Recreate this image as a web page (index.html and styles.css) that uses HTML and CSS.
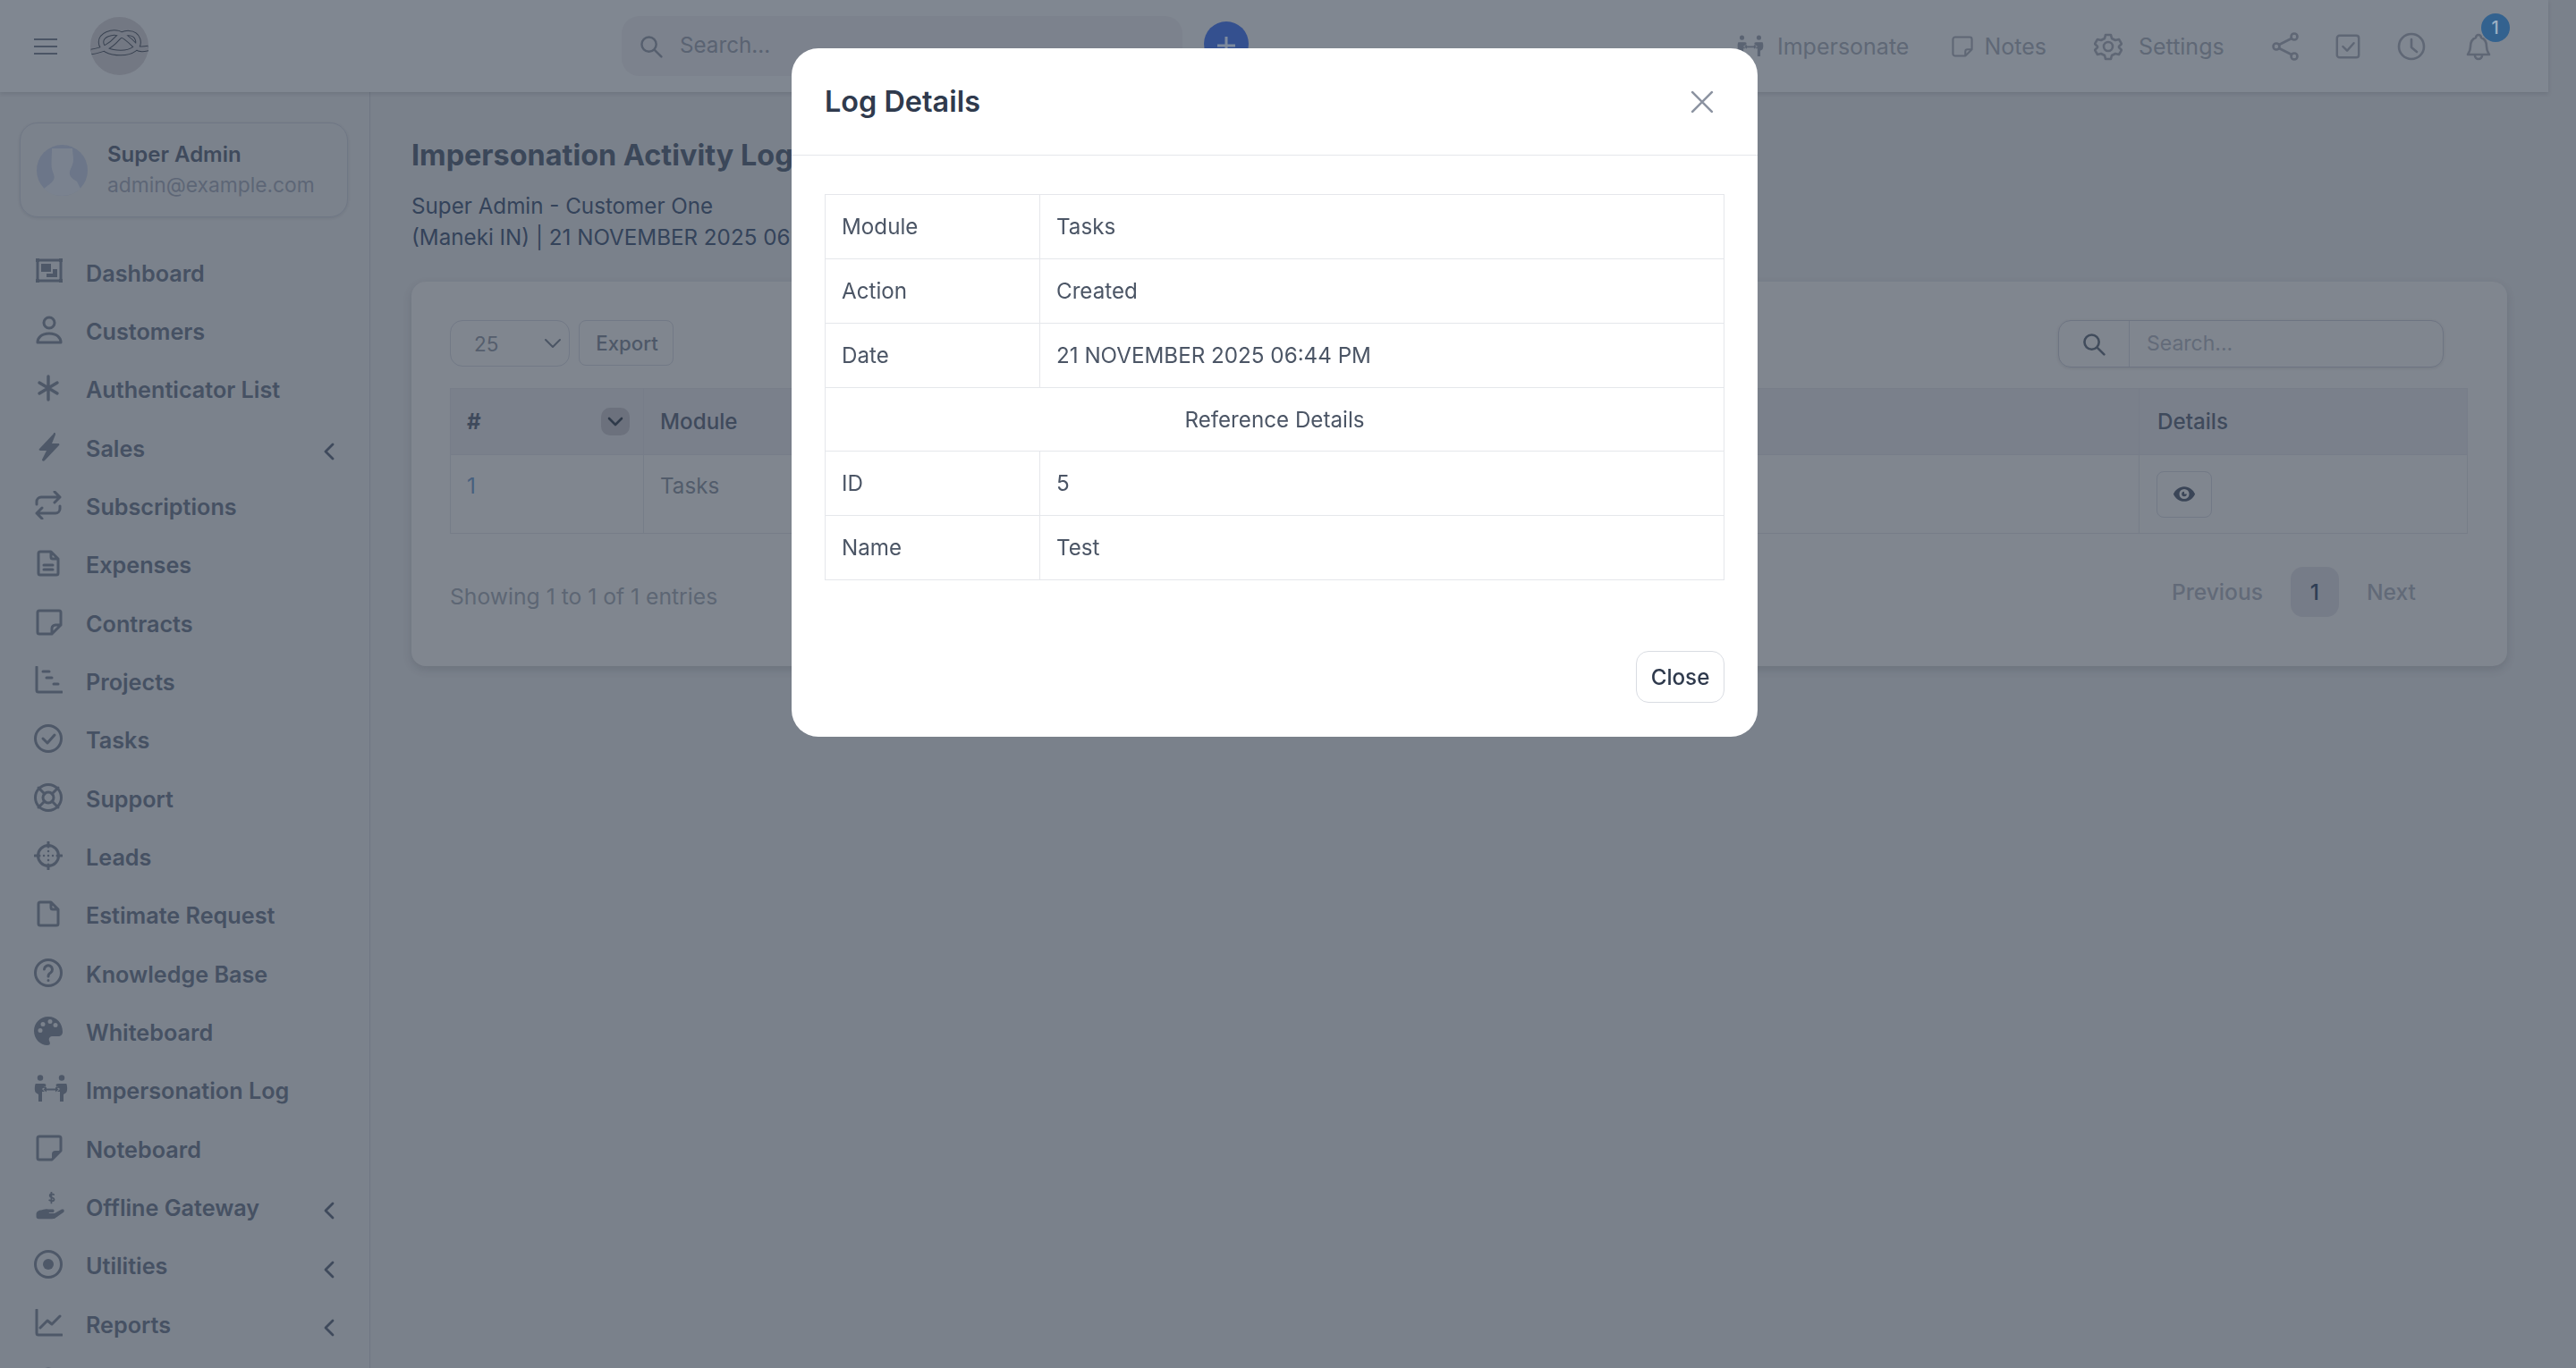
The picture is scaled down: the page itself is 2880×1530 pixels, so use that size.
FILE: index.html
```html
<!DOCTYPE html>
<html lang="en">
<head>
    <meta charset="UTF-8">
    <title>Impersonation Activity Log</title>
    <link rel="stylesheet" href="styles.css">
</head>
<body>
<header class="topbar">
    <button class="burger"><span></span><span></span><span></span></button>
    <div class="logo">
        <svg viewBox="0 0 65 65" width="65" height="65" fill="none">
            <path class="knot-out" d="M1 39 C14 37 22 33 30 24 C37 16 50 16 53 25 C56 34 46 40 34 40 C22 40 12 36 12 28 C12 20 24 16 31 18 C40 21 46 28 52 34 C55 37 60 36 65 35"/>
            <path class="knot-in" d="M1 39 C14 37 22 33 30 24 C37 16 50 16 53 25 C56 34 46 40 34 40 C22 40 12 36 12 28 C12 20 24 16 31 18 C40 21 46 28 52 34 C55 37 60 36 65 35"/>
        </svg>
    </div>
    <div class="topsearch">
        <svg class="ico" viewBox="0 0 32 32" width="26" height="26"><circle cx="13" cy="13" r="10"/><path d="M21 21l9 9"/></svg>
        <span>Search...</span>
    </div>
    <div class="addbtn"><svg viewBox="0 0 50 50" width="50" height="50"><path d="M25 17v20M15 27h20"/></svg></div>
    <nav class="toplinks">
        <a class="toplink link-imp"><svg class="ico solid" viewBox="0 0 38 32" width="30" height="28"><use href="#i-imp"/></svg>Impersonate</a>
        <a class="toplink link-notes"><svg class="ico" viewBox="0 0 32 32" width="26" height="28"><use href="#i-note"/></svg>Notes</a>
        <a class="toplink link-set"><svg class="ico" viewBox="0 0 32 32" width="32" height="32"><path d="M13 3h6l1 4 4 2 4-1 3 5-3 3v1l3 3-3 5-4-1-4 2-1 4h-6l-1-4-4-2-4 1-3-5 3-3v-1l-3-3 3-5 4 1 4-2z"/><circle cx="16" cy="16" r="5"/></svg>Settings</a>
        <svg class="ico ticon i-share" viewBox="0 0 32 32" width="32" height="32"><circle cx="6" cy="16" r="3.5"/><circle cx="26" cy="5" r="3.5"/><circle cx="26" cy="27" r="3.5"/><path d="M9 14L23 7M9 18l14 7"/></svg>
        <svg class="ico ticon i-check" viewBox="0 0 32 32" width="30" height="30"><rect x="3" y="3" width="26" height="26" rx="3"/><path d="M10 16l5 5 8-9"/></svg>
        <svg class="ico ticon i-clock" viewBox="0 0 32 32" width="32" height="32"><circle cx="16" cy="16" r="14"/><path d="M16 8v9l6 5"/></svg>
        <span class="bell">
            <svg class="ico" viewBox="0 0 32 32" width="32" height="32"><path d="M13 6a3 3 0 0 1 6 0c5 2 6 6 6 10 0 5 2 7 3 9H4c1-2 3-4 3-9 0-4 1-8 6-10zM12 26a4 4 0 0 0 8 0"/></svg>
            <b class="badge">1</b>
        </span>
    </nav>
</header>

<svg class="defs" width="0" height="0">
    <defs>
        <g id="i-imp"><circle cx="7" cy="3.5" r="3.2"/><circle cx="31" cy="3.5" r="3.2"/><path d="M2 10h9c2 0 3 1 2 3l-3 2h3v-2l-1 0 0 0-3 3 3 3H9v11H5V22L2 20c-2-2-1-10 0-10zM36 10h-9c-2 0-3 1-2 3l3 2h-3v-2l1 0 0 0 3 3-3 3h3v11h4V22l3-2c2-2 1-10 0-10z"/><path d="M14 13.5l-3.5 3 3.5 3v-2h10v2l3.5-3-3.5-3v2H14z"/></g>
        <path id="i-note" d="M6 3h20a3 3 0 0 1 3 3v14l-9 9H6a3 3 0 0 1-3-3V6a3 3 0 0 1 3-3zM20 29v-6a3 3 0 0 1 3-3h6"/>
    </defs>
</svg>

<div class="layout">
    <aside class="sidebar">
        <div class="usercard">
            <div class="avatar">
                <svg viewBox="0 0 57 57" width="57" height="57"><circle class="av-bg" cx="28.5" cy="28.5" r="28.5"/><path class="av-fg" d="M17 4h23c0 4 1 8 1 13 0 5-3 9-4 13-1 5 3 8 8 11l4 8c-5 5-13 8-21 8s-15-3-20-8c3-3 8-5 11-10 2-3-1-8-2-12-1-5 0-15 0-23z"/></svg>
            </div>
            <div class="userinfo">
                <div class="username">Super Admin</div>
                <div class="usermail">admin@example.com</div>
            </div>
        </div>
        <ul class="nav">
            <li><svg class="ico" viewBox="0 0 32 32"><rect x="4" y="3" width="26" height="23"/><rect class="fill" x="8" y="7" width="11" height="9"/><path class="fill" d="M21 13h5v9H14v-4h7z"/><rect class="fill" x="2" y="1" width="4" height="4"/><rect class="fill" x="28" y="1" width="4" height="4"/><rect class="fill" x="2" y="24" width="4" height="4"/><rect class="fill" x="28" y="24" width="4" height="4"/></svg>Dashboard</li>
            <li><svg class="ico" viewBox="0 0 32 32"><circle cx="17" cy="8" r="6"/><path d="M4 30c0-5 4-10 13-10s13 5 13 10z"/></svg>Customers</li>
            <li><svg class="ico star" viewBox="0 0 32 32"><path d="M16 3v26M6 10l20 12M26 10L6 22"/></svg>Authenticator List</li>
            <li class="has-sub"><svg class="ico solid" viewBox="0 0 32 32"><path d="M22 1L6 18c-1 1 0 2 1 2h7l-5 10c0 2 2 2 3 1l16-17c1-1 0-2-1-2h-7l4-10c0-2-1-3-2-2z"/></svg>Sales<svg class="chev" viewBox="0 0 12 20" width="12" height="20"><path d="M10 2L2 10l8 8"/></svg></li>
            <li><svg class="ico" viewBox="0 0 32 32"><path d="M3 15v-3a5 5 0 0 1 5-5h21M23 1l6 6-6 6M29 17v3a5 5 0 0 1-5 5H3M9 19l-6 6 6 6"/></svg>Subscriptions</li>
            <li><svg class="ico" viewBox="0 0 32 32"><path d="M19 3v6a2 2 0 0 0 2 2h6M7 3h12l8 8v16a2 2 0 0 1-2 2H7a2 2 0 0 1-2-2V5a2 2 0 0 1 2-2zM11 18h10M11 23h10"/></svg>Expenses</li>
            <li><svg class="ico" viewBox="0 0 32 32"><path d="M6 3h22a2 2 0 0 1 2 2v14l-10 10H6a2 2 0 0 1-2-2V5a2 2 0 0 1 2-2zM20 29v-6a4 4 0 0 1 4-4h6"/></svg>Contracts</li>
            <li><svg class="ico" viewBox="0 0 32 32"><path d="M3 1v26a2 2 0 0 0 2 2h26M10 6h7M14 13h6M22 20h5"/></svg>Projects</li>
            <li><svg class="ico" viewBox="0 0 32 32"><circle cx="16" cy="16" r="14.5"/><path d="M10 16l5 5 8-9"/></svg>Tasks</li>
            <li><svg class="ico" viewBox="0 0 32 32"><circle cx="16" cy="16" r="14.5"/><circle cx="16" cy="16" r="6"/><path d="M5 5l7 7M27 5l-7 7M5 27l7-7M27 27l-7-7"/></svg>Support</li>
            <li><svg class="ico" viewBox="0 0 32 32"><circle cx="16" cy="16" r="11.5"/><path d="M16 1v5M16 26v5M1 16h5M26 16h5"/><path class="dots" d="M16 16h.1M11 16h.1M21 16h.1M16 11h.1M16 21h.1"/></svg>Leads</li>
            <li><svg class="ico" viewBox="0 0 32 32"><path d="M19 3v6a2 2 0 0 0 2 2h6M7 3h12l8 8v16a2 2 0 0 1-2 2H7a2 2 0 0 1-2-2V5a2 2 0 0 1 2-2z"/></svg>Estimate Request</li>
            <li><svg class="ico" viewBox="0 0 32 32"><circle cx="16" cy="16" r="14.5"/><path d="M11.5 12a4.5 4.5 0 1 1 7 4c-2 1-2.500 2-2.500 4M16 24.500v.1"/></svg>Knowledge Base</li>
            <li><svg class="ico solid" viewBox="0 0 32 32"><path fill-rule="evenodd" d="M16 0C7 0 0 7 0 16s7 16 15 16c4 0 3-3 2-5-1-3 1-5 4-5h6c3 0 5-2 5-5C32 7 25 0 16 0zM7 18a2.500 2.500 0 1 1 0-5 2.500 2.500 0 0 1 0 5zm3-7a2.500 2.500 0 1 1 0-5 2.500 2.500 0 0 1 0 5zm8-3a2.500 2.500 0 1 1 0-5 2.500 2.500 0 0 1 0 5zm6 4a2.500 2.500 0 1 1 0-5 2.500 2.500 0 0 1 0 5z"/></svg>Whiteboard</li>
            <li><svg class="ico solid extra" viewBox="0 0 38 32"><use href="#i-imp"/></svg>Impersonation Log</li>
            <li><svg class="ico" viewBox="0 0 32 32"><path d="M6 3h22a2 2 0 0 1 2 2v14l-10 10H6a2 2 0 0 1-2-2V5a2 2 0 0 1 2-2z"/><path class="fill" d="M20 29v-6a4 4 0 0 1 4-4h6z"/></svg>Noteboard</li>
            <li class="has-sub"><svg class="ico solid extra" viewBox="0 0 37 36"><path d="M0 28c0-3 3-5 6-5 3-1 6-2 9-1h6c2 0 2 4 0 4h-5v1h7l9-5c3-1 4 2 2 4l-10 7c-1 1-2 1-4 1H3c-2 0-3-1-3-3z"/><path class="dollar" d="M22 3.500c-1-1-5-1.500-5 1.300 0 3 5.500 1.500 5.500 4.700 0 2.500-4 2.500-6 1M19 0v14"/></svg>Offline Gateway<svg class="chev" viewBox="0 0 12 20" width="12" height="20"><path d="M10 2L2 10l8 8"/></svg></li>
            <li class="has-sub"><svg class="ico" viewBox="0 0 32 32"><circle cx="16" cy="16" r="14.5"/><circle class="fill" cx="16" cy="16" r="6"/></svg>Utilities<svg class="chev" viewBox="0 0 12 20" width="12" height="20"><path d="M10 2L2 10l8 8"/></svg></li>
            <li class="has-sub"><svg class="ico" viewBox="0 0 32 32"><path d="M3 1v26a2 2 0 0 0 2 2h26M7 21l8-8 5 4 9-9"/></svg>Reports<svg class="chev" viewBox="0 0 12 20" width="12" height="20"><path d="M10 2L2 10l8 8"/></svg></li>
            <li><svg class="ico" viewBox="0 0 32 32"><circle cx="16" cy="12" r="10"/></svg></li>
        </ul>
    </aside>

    <main class="content">
        <h1>Impersonation Activity Log</h1>
        <p class="subtitle">Super Admin - Customer One<br>(Maneki IN) | 21 NOVEMBER 2025 06:44 PM</p>

        <section class="card">
            <div class="toolbar">
                <div class="tools-left">
                    <div class="pagesize">25<svg viewBox="0 0 20 12" width="20" height="12"><path d="M2 2l8 8 8-8"/></svg></div>
                    <button class="btn-export">Export</button>
                </div>
                <div class="tablesearch">
                    <span class="tablesearch-icon"><svg class="ico dark" viewBox="0 0 32 32" width="26" height="26"><circle cx="13" cy="13" r="10"/><path d="M21 21l9 9"/></svg></span>
                    <span class="tablesearch-input">Search...</span>
                </div>
            </div>

            <table class="logtable">
                <colgroup><col class="c1"><col class="c2"><col class="c3"><col class="c4"><col class="c5"></colgroup>
                <thead>
                    <tr>
                        <th><span class="th-row">#<span class="sortbtn"><svg viewBox="0 0 18 12" width="18" height="12"><path d="M2 2l7 7 7-7"/></svg></span></span></th>
                        <th>Module</th>
                        <th>Action</th>
                        <th>Date</th>
                        <th class="th-last">Details</th>
                    </tr>
                </thead>
                <tbody>
                    <tr>
                        <td class="rownum">1</td>
                        <td>Tasks</td>
                        <td>Created</td>
                        <td>21 NOVEMBER 2025 06:44 PM</td>
                        <td class="td-btn"><span class="eyebtn"><svg viewBox="0 0 28 20" width="26" height="19"><path fill-rule="evenodd" d="M14 1C8 1 3 5 1 10c2 5 7 9 13 9s11-4 13-9c-2-5-7-9-13-9zm0 15a6 6 0 1 1 0-12 6 6 0 0 1 0 12z"/><path d="M14 7a3 3 0 1 0 3 3h-3z"/></svg></span></td>
                    </tr>
                </tbody>
            </table>

            <div class="tablefoot">
                <span class="showing">Showing 1 to 1 of 1 entries</span>
                <div class="pager">
                    <span class="pg-text">Previous</span>
                    <span class="pg-num">1</span>
                    <span class="pg-text">Next</span>
                </div>
            </div>
        </section>
    </main>
</div>

<div class="modal">
    <div class="modal-head">
        <h2>Log Details</h2>
        <svg class="modal-x" viewBox="0 0 24 24" width="26" height="26"><path d="M2 2l20 20M22 2L2 22"/></svg>
    </div>
    <div class="modal-body">
        <table class="detail">
            <tr><td class="lbl">Module</td><td>Tasks</td></tr>
            <tr><td class="lbl">Action</td><td>Created</td></tr>
            <tr><td class="lbl">Date</td><td>21 NOVEMBER 2025 06:44 PM</td></tr>
            <tr class="midrow"><td colspan="2" class="mid">Reference Details</td></tr>
            <tr><td class="lbl">ID</td><td>5</td></tr>
            <tr><td class="lbl">Name</td><td>Test</td></tr>
        </table>
    </div>
    <div class="modal-foot">
        <button class="btn-close">Close</button>
    </div>
</div>
</body>
</html>
```

FILE: styles.css
```css
* { box-sizing: border-box; }
html, body { height: 100%; }
body { margin: 0; height: 1530px; overflow: hidden; background: #7a818b; font-family: Inter, "Noto Sans", sans-serif; color: #36445a; }
ul { list-style: none; margin: 0; padding: 0; }
button { font-family: inherit; }
.defs { position: absolute; }

.ico { fill: none; stroke: #5f6775; stroke-width: 2.6; stroke-linecap: round; stroke-linejoin: round; flex: none; }
.ico.solid { fill: #5a6372; stroke: none; }
.ico.dark { stroke: #414c5c; stroke-width: 3.2; }

/* top bar */
.topbar { display: flex; align-items: center; width: 2849px; height: 103px; background: #808791; box-shadow: 0 2px 4px rgba(40,48,60,.15); position: relative; z-index: 2; }
.burger { width: 26px; margin-left: 38px; padding: 0; background: none; border: 0; display: flex; flex-direction: column; gap: 6px; }
.burger span { height: 2px; background: #4b5565; }
.logo { width: 65px; height: 65px; margin-left: 37px; border-radius: 50%; background: #737883; }
.knot-out { stroke: #3a4352; stroke-width: 6.500; }
.knot-in { stroke: #737883; stroke-width: 4.500; }
.topsearch { display: flex; align-items: center; gap: 19px; width: 627px; height: 67px; margin-left: 529px; padding-left: 20px; border-radius: 20px; background: #7c828d; color: #5a6372; font-size: 24.2px; }
.topsearch .ico { stroke: #565f6e; stroke-width: 3; }
.topsearch span { margin-top: -3px; }
.addbtn { width: 50px; height: 50px; margin-left: 24px; margin-top: -6px; border-radius: 50%; background: #34508f; }
.addbtn svg { display: block; fill: none; stroke: #7d8a9e; stroke-width: 3; }
.toplinks { display: flex; align-items: center; flex: 1; color: #5f6876; font-size: 25px; }
.toplink { display: flex; align-items: center; gap: 15px; }
.link-imp { margin-left: 546px; }
.link-notes { margin-left: 47px; gap: 11px; }
.link-set { margin-left: 53px; gap: 18px; }
.ticon { margin-left: 24px; }
.i-share { margin-left: 52px; }
.i-check { margin-left: 39px; }
.i-clock { margin-left: 40px; }
.bell { position: relative; display: flex; margin-left: 43px; }
.badge { position: absolute; top: -21px; left: 19px; width: 32px; height: 32px; border-radius: 50%; background: #33628f; color: #9db0c4; font-size: 20px; font-weight: 500; line-height: 32px; text-align: center; }

/* sidebar */
.layout { display: flex; height: 1427px; }
.sidebar { width: 414px; flex: none; padding: 34px 24px 0 22px; background: #7b828c; border-right: 1px solid #6f7683; }
.usercard { display: flex; align-items: center; gap: 22px; width: 367px; height: 106px; padding-left: 18px; border: 1px solid #6f7785; border-radius: 20px; box-shadow: 0 1px 3px rgba(40,48,60,.12); }
.avatar { width: 57px; height: 57px; flex: none; }
.av-bg { fill: #6c7689; }
.av-fg { fill: #7a828f; }
.username { font-size: 24px; font-weight: 600; line-height: 34px; color: #3f4a5c; }
.usermail { font-size: 22.8px; line-height: 34px; color: #5d6676; }
.nav { margin-top: 30px; margin-left: -22px; }
.nav li { display: flex; align-items: center; height: 65.33px; padding-left: 38px; font-size: 25.2px; font-weight: 600; color: #465163; position: relative; }
.nav .ico { width: 32px; height: 32px; margin-right: 26px; margin-top: -4px; stroke: #4e5868; stroke-width: 3; }
.nav .ico.star { stroke-width: 3.400; }
.nav .ico.solid { fill: #4e5868; stroke: none; }
.nav .ico.extra { width: 38px; margin-right: 20px; }
.nav .fill { fill: #4e5868; stroke: none; }
.nav .dots { stroke-width: 2.400; }
.dollar { fill: none; stroke: #4e5868; stroke-width: 2; }
.chev { position: absolute; left: 362px; top: 26px; fill: none; stroke: #3f4a5c; stroke-width: 2.800; stroke-linecap: round; stroke-linejoin: round; }

/* main */
.content { width: 2435px; flex: none; padding: 44px 46px 0; }
h1 { margin: 0; font-size: 32.4px; font-weight: 700; line-height: 54px; color: #3b4759; white-space: nowrap; }
.subtitle { margin: 12px 0 0; font-size: 24.2px; line-height: 35px; color: #34435a; white-space: nowrap; }
.card { height: 430px; margin-top: 32px; padding: 43px 44px 0 43px; border-radius: 16px; background: #80868f; box-shadow: 0 4px 10px rgba(50,56,68,.18); }
.toolbar { display: flex; justify-content: space-between; height: 76px; padding-right: 27px; }
.tools-left { display: flex; gap: 10px; align-items: flex-start; }
.pagesize { display: flex; align-items: center; justify-content: space-between; width: 134px; height: 52px; padding: 0 8px 0 26px; border: 1px solid #727986; border-radius: 14px; font-size: 22.5px; color: #555e6d; }
.pagesize svg, .sortbtn svg { fill: none; stroke: #4b5565; stroke-width: 2; stroke-linecap: round; stroke-linejoin: round; }
.btn-export { width: 106px; height: 51px; padding: 0 0 0 2px; background: none; border: 1px solid #727986; border-radius: 8px; font-size: 22.2px; font-weight: 500; color: #4e5868; }
.tablesearch { display: flex; width: 431px; height: 53px; border: 1px solid #6d7482; border-radius: 14px; box-shadow: 0 1px 3px rgba(40,48,60,.12); }
.tablesearch-icon { display: flex; align-items: center; justify-content: center; width: 79px; border-right: 1px solid #727986; }
.tablesearch-input { padding-left: 19px; line-height: 51px; font-size: 23px; color: #636b79; }

.logtable { width: 2256px; table-layout: fixed; border-collapse: collapse; font-size: 24.2px; }
.c1 { width: 216px; }
.c2 { width: 300px; }
.c3 { width: 541px; }
.c5 { width: 367px; }
.logtable th { height: 74px; padding: 0 18px; text-align: left; font-weight: 500; background: #7a808b; color: #3f4a5c; border: 1px solid #777d89; }
.logtable .th-last { padding-left: 20px; }
.logtable td { height: 88px; padding: 0 18px 18px; color: #525c6b; border: 1px solid #767d88; }
.logtable .td-btn { padding-bottom: 0; padding-top: 0; padding-left: 19px; }
.logtable .rownum { color: #47607e; }
.th-row { display: flex; justify-content: space-between; align-items: center; font-weight: 700; }
.sortbtn { display: flex; align-items: center; justify-content: center; width: 32px; height: 31px; border-radius: 10px; background: #6c717d; margin-right: -3px; }
.sortbtn svg { stroke: #2f3a4a; stroke-width: 2.600; }
.eyebtn { display: flex; align-items: center; justify-content: center; width: 62px; height: 52px; border: 1px solid #727986; border-radius: 8px; }
.eyebtn svg { fill: #3a4557; }
.tablefoot { display: flex; justify-content: space-between; align-items: center; height: 56px; margin-top: 37px; padding-right: 58px; }
.showing { font-size: 24.7px; color: #5d6674; padding-top: 10px; }
.pager { display: flex; align-items: center; gap: 31px; font-size: 24.6px; font-weight: 500; }
.pg-text { color: #626a78; }
.pg-num { width: 54px; height: 56px; border-radius: 14px; background: #767c88; color: #2f3f55; text-align: center; line-height: 56px; }

/* modal */
.modal { position: fixed; left: 885px; top: 54px; z-index: 5; display: flex; flex-direction: column; width: 1080px; height: 770px; border-radius: 30px; background: #fff; }
.modal-head { display: flex; align-items: center; justify-content: space-between; height: 120px; padding: 0 49px 0 37px; border-bottom: 1px solid #e5e7eb; }
.modal-head h2 { margin: 0; font-size: 32.4px; font-weight: 600; color: #2f3a4d; }
.modal-x { fill: none; stroke: #8c93a1; stroke-width: 2.400; stroke-linecap: round; }
.modal-body { flex: 1; padding: 43px 37px 0; }
.detail { width: 100%; table-layout: fixed; border-collapse: collapse; font-size: 24.2px; color: #4b5565; }
.detail td { height: 72px; padding: 0 18px; border: 1px solid #e5e7eb; }
.detail .midrow td { height: 71px; }
.detail .lbl { width: 240px; }
.detail .mid { text-align: center; }
.modal-foot { display: flex; justify-content: flex-end; padding: 0 37px 38px; }
.btn-close { width: 99px; height: 58px; padding: 0; background: #fff; border: 1px solid #d9dce2; border-radius: 14px; font-size: 24.2px; font-weight: 500; color: #2f3a4d; }
```
